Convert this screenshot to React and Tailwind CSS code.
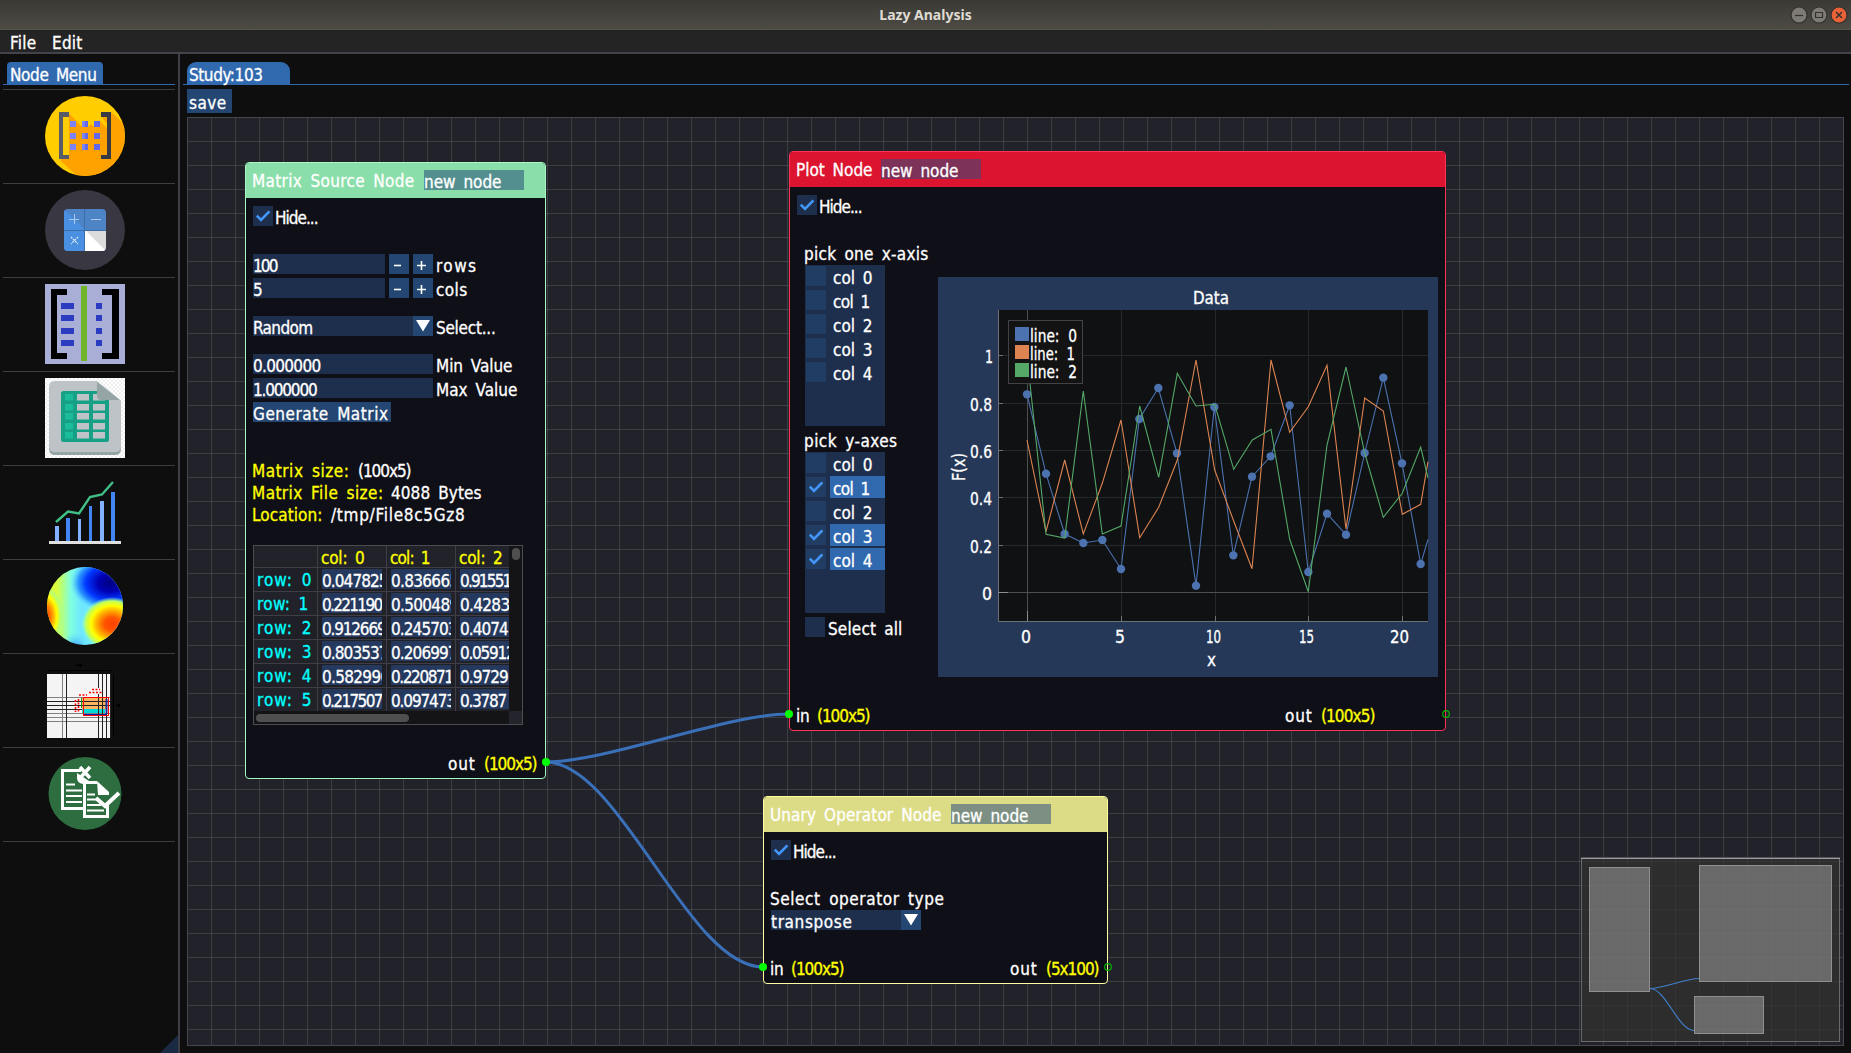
import React, { useLayoutEffect, useRef, useState } from 'react';

const FONT = 'DejaVu Sans Condensed';

/* Text fitted to a given advance width through letter spacing. */
function T({ w, children, className = '' }) {
  const ref = useRef(null);
  const [ls, setLs] = useState(0);
  useLayoutEffect(() => {
    const natural = ref.current.getBoundingClientRect().width;
    setLs((w + 1.5 - natural) / String(children).length);
  }, []);
  return (
    <span className={'block h-5 shrink-0 leading-[24px] whitespace-pre ' + className} style={{ width: w }}>
      <span ref={ref} className="-ml-px inline-block [word-spacing:3px]" style={{ letterSpacing: ls }}>{children}</span>
    </span>
  );
}

const ADV = { '.': 4, 1: 5, 7: 7.2 };
const numWidth = (s) => [...s].reduce((a, c) => a + (ADV[c] ?? 9), 0) - 1;

function Check() {
  return (
    <svg className="block size-5" viewBox="0 0 20 20" fill="none" stroke="#4296fa" strokeWidth="2.6">
      <path d="M3.8 9.6L8 14L16.4 5.4" />
    </svg>
  );
}

function HideRow({ w = 41 }) {
  return (
    <div className="mt-2 flex gap-[3px]">
      <div className="size-5 bg-[#1e2f4d]"><Check /></div>
      <T w={w}>Hide...</T>
    </div>
  );
}

function Header({ title, w, gap, bg, field }) {
  return (
    <div className={'flex h-[35px] shrink-0 pl-[7px] ' + bg}>
      <T w={w} className="mt-[6px]">{title}</T>
      <div className={'mt-[7px] h-5 w-[100px] pl-px ' + gap + ' ' + field}>
        <T w={76}>new node</T>
      </div>
    </div>
  );
}

function Arrow() {
  return (
    <svg className="block size-5 shrink-0 bg-[#234672]" viewBox="0 0 20 20">
      <path d="M3 4H17L10 15.5Z" fill="#fff" />
    </svg>
  );
}

function Stepper({ value, vw, label, lw }) {
  return (
    <div className="flex gap-1">
      <div className="h-5 w-[132px] bg-[#1e2f4d] pl-px"><T w={vw}>{value}</T></div>
      <svg className="size-5 bg-[#234672]" viewBox="0 0 20 20"><path d="M5 11.5H12" stroke="#fff" strokeWidth="1.6" /></svg>
      <svg className="size-5 bg-[#234672]" viewBox="0 0 20 20"><path d="M4 11.5H13M8.5 7V16" stroke="#fff" strokeWidth="1.6" /></svg>
      <T w={lw}>{label}</T>
    </div>
  );
}

function Field({ value, vw, label, lw, mt }) {
  return (
    <div className={'flex gap-1 ' + mt}>
      <div className="h-5 w-[180px] bg-[#1e2f4d] pl-px"><T w={vw}>{value}</T></div>
      <T w={lw}>{label}</T>
    </div>
  );
}

const ROWS = [
  ['0.047825', '0.836665', '0.91551'],
  ['0.221190', '0.500489', '0.4283'],
  ['0.912669', '0.245703', '0.4074'],
  ['0.803537', '0.206997', '0.05912'],
  ['0.582990', '0.220871', '0.9729'],
  ['0.217507', '0.097473', '0.3787'],
];

function MatrixTable() {
  return (
    <div className="mt-[22px] grid h-[180px] w-[270px] grid-cols-[255px_13px] grid-rows-[165px_13px] border border-[#4b4b50] bg-[#141417]">
      <div className="overflow-hidden bg-[#1d1d24]">
        <div className="w-[273px]">
          <div className="flex h-[22px] border-b border-[#3e3e44] bg-[#22222a] text-[#ffff00]">
            <div className="w-16 border-r border-[#3e3e44]" />
            {[42, 38, 42].map((w, i) => (
              <div key={i} className="w-[69px] border-r border-[#3e3e44] pl-1"><T w={w}>{'col: ' + i}</T></div>
            ))}
          </div>
          {ROWS.map((r, i) => (
            <div key={i} className={'flex h-6 border-b border-[#3e3e44] ' + (i % 2 ? 'bg-[#22222a]' : 'bg-[#1f1f27]')}>
              <div className="w-16 border-r border-[#3e3e44] pl-1 text-[#00ffff]"><T w={i === 1 ? 50 : 54}>{'row: ' + i}</T></div>
              {r.map((v, j) => (
                <div key={j} className="w-[69px] border-r border-[#3e3e44] pt-px pl-1">
                  <div className="h-5 w-[60px] overflow-hidden bg-[#24395d] pl-px"><T w={numWidth(v)}>{v}</T></div>
                </div>
              ))}
            </div>
          ))}
        </div>
      </div>
      <div className="flex justify-center pt-[2px]"><div className="h-3 w-2 rounded-full bg-[#4f4f4f]" /></div>
      <div className="flex items-center pl-[2px]"><div className="h-2 w-[153px] rounded-full bg-[#4f4f4f]" /></div>
      <div className="bg-[#24242d]" />
    </div>
  );
}

function MatrixNode() {
  return (
    <div className="absolute top-[44px] left-[57px] flex h-[617px] w-[301px] flex-col overflow-hidden rounded-[4px] border border-[#a6f7c0] bg-[#0f0f17]">
      <Header title="Matrix Source Node" w={161} gap="ml-[10px]" bg="bg-[#8adea9]" field="bg-[#548f90]" />
      <div className="flex flex-col pl-[7px]">
        <HideRow />
        <div className="mt-7 flex flex-col gap-1">
          <Stepper value="100" vw={22} label="rows" lw={40} />
          <Stepper value="5" vw={8} label="cols" lw={30} />
        </div>
        <div className="mt-[18px] flex">
          <div className="h-5 w-40 bg-[#1e2f4d] pl-px"><T w={58}>Random</T></div>
          <Arrow />
          <T w={58} className="ml-1">Select...</T>
        </div>
        <Field mt="mt-[18px]" value="0.000000" vw={66} label="Min Value" lw={75} />
        <Field mt="mt-1" value="1.000000" vw={62} label="Max Value" lw={80} />
        <div className="mt-1 h-5 w-[138px] bg-[#234672] pl-px"><T w={134}>Generate Matrix</T></div>
        <div className="mt-[37px] flex flex-col gap-[2px]">
          <div className="flex gap-[10px]"><T w={96} className="text-[#ffff00]">Matrix size:</T><T w={51}>(100x5)</T></div>
          <div className="flex gap-[9px]"><T w={130} className="text-[#ffff00]">Matrix File size:</T><T w={89}>4088 Bytes</T></div>
          <div className="flex gap-[10px]"><T w={69} className="text-[#ffff00]">Location:</T><T w={133}>/tmp/File8c5Gz8</T></div>
        </div>
        <MatrixTable />
        <div className="mt-[27px] flex justify-end gap-[10px] pr-[9px]"><T w={26}>out</T><T w={51} className="text-[#ffff00]">(100x5)</T></div>
      </div>
    </div>
  );
}

function ColList({ picked }) {
  return (
    <div className="flex h-[161px] w-20 flex-col gap-[2px] bg-[#1e2f4d]">
      {[0, 1, 2, 3, 4].map((i) => (
        <div key={i} className="flex h-[22px] gap-1 pl-px">
          <div className="mt-px size-5 bg-[#223d64]">{picked.includes(i) && <Check />}</div>
          <div className={'flex-1 pt-px pl-1 ' + (picked.includes(i) ? 'bg-[#3169af]' : '')}>
            <T w={i === 1 ? 35 : 38}>{'col ' + i}</T>
          </div>
        </div>
      ))}
    </div>
  );
}

const BLUE = [[291,373],[348,611],[404,792],[460,819],[517,810],[573,897],[628,447],[685,354],[741,550],[798,947],[853,411],[910,856],[966,620],[1022,559],[1079,406],[1135,906],[1191,731],[1248,794],[1304,549],[1360,323],[1416,580],[1472,882],[1494,808]];
const ORANGE = [[291,510],[348,785],[404,570],[460,792],[517,640],[573,450],[629,803],[686,712],[742,570],[798,270],[854,600],[910,750],[966,896],[1023,270],[1079,487],[1135,410],[1191,286],[1248,777],[1304,384],[1360,423],[1417,733],[1472,703],[1494,575]];
const GREEN = [[291,255],[348,793],[404,804],[460,363],[517,792],[573,768],[629,408],[686,622],[742,310],[798,408],[854,403],[911,598],[967,510],[1023,478],[1079,808],[1135,965],[1191,525],[1248,291],[1304,549],[1360,742],[1417,670],[1472,531],[1494,624]];
const px = ([x, y]) => [(x - 24) / 3, (y - 21) / 3];
const line = (a) => a.map((p) => px(p).map((v) => v.toFixed(1)).join(',')).join(' ');

const Label = ({ x, y, w, children, ...p }) => (
  <text x={x} y={y} textLength={w} lengthAdjust="spacingAndGlyphs" fill="#fff" fontSize="17" {...p}>{children}</text>
);

function Chart() {
  return (
    <svg className="block h-[400px] w-[500px] bg-[#253858]" viewBox="0 0 500 400">
      <rect x="60" y="33" width="430" height="311" fill="#0f1112" />
      <g stroke="#26292a" strokeWidth="1">
        {[78.5, 126.5, 173.5, 220.5, 268.5].map((y) => <path key={y} d={`M60 ${y}H490`} />)}
        {[183.5, 277.5, 370.5, 464.5].map((x) => <path key={x} d={`M${x} 33V344`} />)}
      </g>
      <path d="M60 315.5H490M89.5 33V344" stroke="#4d4f50" />
      <g stroke="#6c7176">
        <path d="M60.5 33V344.5H490" fill="none" />
        {[78.5, 126.5, 173.5, 220.5, 268.5].map((y) => <path key={y} d={`M60 ${y}H65`} />)}
        {[183.5, 277.5, 370.5, 464.5].map((x) => <path key={x} d={`M${x} 344V339`} />)}
      </g>
      <path d="M60 315.5H70M89.5 344V334" stroke="#8c8f90" />
      <polyline points={line(BLUE)} fill="none" stroke="#4c72b0" strokeWidth="1.1" />
      {BLUE.slice(0, 22).map((p, i) => <circle key={i} cx={px(p)[0]} cy={px(p)[1]} r="4.2" fill="#4c72b0" />)}
      <polyline points={line(ORANGE)} fill="none" stroke="#dd8452" strokeWidth="1.1" />
      <polyline points={line(GREEN)} fill="none" stroke="#55a868" strokeWidth="1.1" />
      <rect x="70.5" y="43.5" width="74" height="63" fill="#131314" stroke="#424247" />
      <rect x="77" y="50" width="14" height="14" fill="#4c72b0" />
      <rect x="77" y="68" width="14" height="14" fill="#dd8452" />
      <rect x="77" y="86" width="14" height="14" fill="#55a868" />
      <g stroke="#fff" strokeWidth="0.3">
        <Label x="92" y="65" w="47">line:&#160; 0</Label>
        <Label x="92" y="83" w="45">line:&#160; 1</Label>
        <Label x="92" y="101" w="47">line:&#160; 2</Label>
        <Label x="255" y="27" w="36">Data</Label>
        <Label x="47" y="86" w="8">1</Label>
        <Label x="32" y="134" w="22">0.8</Label>
        <Label x="32" y="181" w="22">0.6</Label>
        <Label x="32" y="228" w="22">0.4</Label>
        <Label x="32" y="276" w="22">0.2</Label>
        <Label x="44" y="323" w="10">0</Label>
        <Label x="83" y="366" w="10">0</Label>
        <Label x="177" y="366" w="10">5</Label>
        <Label x="268" y="366" w="15">10</Label>
        <Label x="361" y="366" w="15">15</Label>
        <Label x="452" y="366" w="19">20</Label>
        <Label x="269" y="389" w="9">x</Label>
        <Label x="0" y="0" w="28" transform="translate(27 204) rotate(-90)">F(x)</Label>
      </g>
    </svg>
  );
}

function PlotNode() {
  return (
    <div className="absolute top-[33px] left-[601px] flex h-[580px] w-[657px] flex-col overflow-hidden rounded-[4px] border border-[#ff3156] bg-[#0f0f17]">
      <Header title="Plot Node" w={75} gap="ml-[9px]" bg="bg-[#dc1430]" field="bg-[#7c3259]" />
      <div className="flex flex-col pl-[7px]">
        <HideRow />
        <div className="flex pl-2">
          <div className="w-[133px] pt-[27px]">
            <T w={123}>pick one x-axis</T>
            <div className="mt-[3px]"><ColList picked={[]} /></div>
            <T w={92} className="mt-[3px]">pick y-axes</T>
            <div className="mt-[3px]"><ColList picked={[1, 3, 4]} /></div>
            <div className="mt-1 flex gap-1"><div className="size-5 bg-[#1e2f4d]" /><T w={73}>Select all</T></div>
          </div>
          <div className="pt-[62px]"><Chart /></div>
        </div>
        <div className="mt-[27px] flex pr-[71px]">
          <T w={12}>in</T><T w={51} className="ml-[9px] text-[#ffff00]">(100x5)</T>
          <T w={26} className="ml-auto">out</T><T w={52} className="ml-[10px] text-[#ffff00]">(100x5)</T>
        </div>
      </div>
    </div>
  );
}

function UnaryNode() {
  return (
    <div className="absolute top-[678px] left-[575px] flex h-[188px] w-[345px] flex-col overflow-hidden rounded-[4px] border border-[#ffffa0] bg-[#0f0f17]">
      <Header title="Unary Operator Node" w={170} gap="ml-[10px]" bg="bg-[#dcdc87]" field="bg-[#7c8f82]" />
      <div className="flex flex-col pl-[7px]">
        <HideRow />
        <T w={173} className="mt-[27px]">Select operator type</T>
        <div className="mt-[3px] flex"><div className="h-5 w-[130px] bg-[#1e2f4d] pl-px"><T w={80}>transpose</T></div><Arrow /></div>
        <div className="mt-[27px] flex pr-[9px]">
          <T w={12}>in</T><T w={51} className="ml-[9px] text-[#ffff00]">(100x5)</T>
          <T w={26} className="ml-auto">out</T><T w={51} className="ml-[10px] text-[#ffff00]">(5x100)</T>
        </div>
      </div>
    </div>
  );
}

function MiniMap() {
  return (
    <svg className="absolute right-[2px] bottom-[2px] h-[186px] w-[260px]" viewBox="1581 857 260 186">
      <rect x="1581" y="857" width="259" height="185" fill="rgba(50,50,48,0.75)" />
      <rect x="1581.5" y="858.5" width="258" height="183" fill="none" stroke="#69696b" />
      <path d="M1581 857.5H1840" stroke="#555557" />
      <path d="M1581 858.5H1840" stroke="#9c9c9c" />
      <g fill="rgba(200,200,200,0.39)" stroke="#8f8f91">
        <rect x="1589.5" y="867.5" width="60" height="124" />
        <rect x="1699.5" y="865.5" width="132" height="116" />
        <rect x="1694.5" y="996.5" width="69" height="37" />
      </g>
      <g fill="none" stroke="#4180cc" strokeWidth="1.2">
        <path d="M1650 988.5C1663 988.5 1686 978.5 1699 978.5" />
        <path d="M1650 988.5C1666 988.5 1678 1030.5 1694 1030.5" />
      </g>
    </svg>
  );
}

function Links() {
  return (
    <svg className="absolute inset-0 h-full w-full" viewBox="188 118 1655 927">
      <g fill="none" stroke="#3970b8" strokeWidth="3">
        <path d="M545.5 762C607 762 727 714 789 714" />
        <path d="M545.5 762C620 762 688 967 763 967" />
      </g>
    </svg>
  );
}

function Pins() {
  return (
    <svg className="absolute inset-0 h-full w-full" viewBox="188 118 1655 927">
      <g fill="#00ff00">
        <circle cx="546" cy="762" r="4" /><circle cx="789" cy="714" r="4" /><circle cx="763" cy="967" r="4" />
      </g>
      <g fill="none" stroke="#00b400" strokeWidth="1.2"><circle cx="1446" cy="714" r="3.3" /><circle cx="1108" cy="967" r="3.3" /></g>
    </svg>
  );
}

const Svg = ({ children }) => <svg className="block size-20" viewBox="0 0 80 80">{children}</svg>;

const ICONS = [
  <Svg key="matrix">
    <clipPath id="c1"><circle cx="40" cy="40" r="40" /></clipPath>
    <circle cx="40" cy="40" r="40" fill="#ffcd00" />
    <path clipPath="url(#c1)" d="M24 17L36 30L43 31L46 28L49 31L55 25L62 32V28L57 21L66 16L80 29V80H32L15 64L24 60Z" fill="#ffa200" />
    <path d="M24 16H14V63H24V59H18V21H24Z" fill="#595c68" />
    <path d="M56 16H66V63H56V59H62V21H56Z" fill="#373a42" />
    {[25, 37, 48].map((y) => (
      <g key={y}>
        <path d={`M25 ${y}h6v6h-6zM37 ${y}h3v6h-3z`} fill="#7b84f5" />
        <path d={`M40 ${y}h3v6h-3zM49 ${y}h6v6h-6z`} fill="#6067ea" />
      </g>
    ))}
  </Svg>,
  <Svg key="calc">
    <circle cx="40" cy="40" r="40" fill="#393842" />
    <clipPath id="c2"><rect x="19" y="19" width="42" height="42" rx="4" /></clipPath>
    <g clipPath="url(#c2)">
      <path d="M19 19H61V61H19Z" fill="#4d84c6" />
      <path d="M19 19L61 61H19Z" fill="#4a90e2" />
      <path d="M40 40H61V61H40Z" fill="#dcdcdc" /><path d="M40 40L61 61H40Z" fill="#fff" />
      <path d="M39.5 19V61M19 40.500H61" stroke="#3d6ea8" />
    </g>
    <path d="M24 29.500H34M29.500 24V34M46 29.500H56" stroke="#a9c8ee" />
    <path d="M26 47L33 54M33 47L26 54" stroke="#e4eefb" strokeWidth="1.2" strokeDasharray="2 1" />
  </Svg>,
  <Svg key="concat">
    <path d="M0 0H80V80H0Z" fill="#a9aed6" />
    <path d="M6 5H22V11H12V69H22V75H6ZM57 5H74V75H57V69H67V11H57Z" />
    <path d="M36 2H42V77H36Z" fill="#70b52a" />
    {[19, 31, 44, 56].map((y) => <path key={y} d={`M16 ${y}h13v6h-13zM51 ${y}h6v6h-6z`} fill="#2c3cc0" />)}
  </Svg>,
  <Svg key="sheet">
    <pattern id="chk" width="4" height="4" patternUnits="userSpaceOnUse"><path d="M0 0H4V4H0Z" fill="#fff" /><path d="M0 0H2V2H0ZM2 2H4V4H2Z" fill="#f0f0f0" /></pattern>
    <path d="M0 0H80V80H0Z" fill="url(#chk)" />
    <path d="M9 6H70L76 24V71Q76 77 70 77H10Q4 77 4 71V10Z" fill="#95a5a6" />
    <path d="M10 3H53L76 22V68Q76 74 70 74H10Q4 74 4 68V9Q4 3 10 3Z" fill="#bdc3c7" />
    <rect x="16" y="13" width="48" height="51" rx="2.500" fill="#16a085" />
    {[16, 26, 35, 45, 54].map((y) => (
      <g key={y}><rect x="20" y={y} width="8" height="6.500" fill="#1abc9c" /><path d={`M32 ${y}h12v6.500h-12zM48 ${y}h12v6.500h-12z`} fill="#bdc3c7" /></g>
    ))}
    <path d="M52 0H80V24L75 22L52 3Z" fill="url(#chk)" />
    <path d="M52 4L75 22H56Q52 22 52 17Z" fill="#95a5a6" />
  </Svg>,
  <Svg key="bars">
    <path d="M10 54h4v15h-4zM33 47h3v22h-3zM55 29h4v40h-4z" fill="#82b1ff" />
    <path d="M21 46h4v23h-4zM44 34h3v35h-3zM66 20h4v49h-4z" fill="#4285f4" />
    <path d="M4 69H76V72H4Z" fill="#e0e0e0" />
    <path d="M11 50L23 39.500L34 41.500L45 25L57 22.500L68 10" fill="none" stroke="#40bf87" strokeWidth="2.400" />
  </Svg>,
  <Svg key="heat">
    <clipPath id="c6"><ellipse cx="40" cy="40" rx="38" ry="39" /></clipPath>
    <linearGradient id="h0"><stop offset="0" stopColor="#e8ff30" /><stop offset=".15" stopColor="#d8ff40" /><stop offset=".32" stopColor="#7fffe0" /><stop offset=".45" stopColor="#6fe8ff" /><stop offset="1" stopColor="#70f0ff" /></linearGradient>
    <radialGradient id="h1"><stop offset="0" stopColor="#000080" /><stop offset=".3" stopColor="#0000b4" /><stop offset=".6" stopColor="#0038ff" /><stop offset=".8" stopColor="#2c98ff" /><stop offset="1" stopColor="#60d8ff" stopOpacity="0" /></radialGradient>
    <radialGradient id="h2"><stop offset="0" stopColor="#ff4000" /><stop offset=".25" stopColor="#ff5500" /><stop offset=".5" stopColor="#ffb000" /><stop offset=".68" stopColor="#ffff00" /><stop offset=".85" stopColor="#c0ff60" /><stop offset="1" stopColor="#7fffe0" stopOpacity="0" /></radialGradient>
    <radialGradient id="h3"><stop offset="0" stopColor="#2880ff" /><stop offset="1" stopColor="#60d8ff" stopOpacity="0" /></radialGradient>
    <g clipPath="url(#c6)">
      <path d="M0 0H80V80H0Z" fill="url(#h0)" />
      <ellipse cx="65" cy="17" rx="40" ry="29" fill="url(#h1)" />
      <ellipse cx="67" cy="58" rx="31" ry="27" fill="url(#h2)" />
      <ellipse cx="-1" cy="50" rx="19" ry="30" fill="url(#h2)" />
      <ellipse cx="30" cy="83" rx="14" ry="17" fill="url(#h3)" />
    </g>
  </Svg>,
  <Svg key="slice">
    <path d="M3 10.500H66M68.500 15V75" stroke="#000" />
    <path d="M31 4h2v2h-2zM34 4h3v3h-3zM72 44h3v3h-3z" fill="#000" />
    <path d="M2 14H66V78H2Z" fill="#f4f4f4" />
    <path d="M37 38H62V49H37Z" fill="#ffb45f" /><path d="M37 49H60V53H37Z" fill="#00d8d8" /><path d="M38 54H61V55.500H38Z" fill="#0018b0" />
    <path d="M2 37.500H66M2 53.500H66M2 57.500H66M2 61.500H66M17.500 14V78" stroke="#808080" />
    <path d="M2 41.500H66M2 45.500H66M2 49.500H37M21.500 14V78M53.500 14V78M57.500 14V78M61.500 14V78M65.500 14V78" stroke="#222" />
    <path d="M36.500 38V48" stroke="#1a9a1a" />
    <path d="M61.500 39V54" stroke="#202a90" strokeWidth="2" />
    <rect x="38.500" y="37.500" width="25" height="18" fill="none" stroke="#f00" />
    <path d="M43 28H56V34H43Z" fill="#f4f4f4" />
    <path d="M44 32.500H57M47 29.500H55M34 35H42M30.500 40V52M33.500 39V53" stroke="#f00" strokeWidth="1.6" strokeDasharray="2 1.500" />
  </Svg>,
  <Svg key="docs">
    <circle cx="40" cy="39.500" r="36.500" fill="#2d6d40" />
    <g fill="none" stroke="#fff" strokeWidth="3">
      <path d="M38 54.500H17.500V16.500H36" />
      <path d="M39.500 29V62.500H62.500V49M39 28.500H52" />
      <path d="M35 13L45 24M45 13L35 24" strokeWidth="3.500" />
      <path d="M51 44L60 52L74 39" strokeWidth="4" />
      <path d="M21 30.500H30M21 36.500H37M21 42H37M21 48H37M42 40.500H50M42 45.500H51M42 51H56M42 56.500H59" strokeWidth="2.200" />
    </g>
    <path d="M52 27L64 38V41H53ZM32 19L44 27L38 30Q32 29 32 24Z" fill="#fff" />
  </Svg>,
];

function Sidebar() {
  return (
    <div className="flex w-[180px] shrink-0 flex-col border-r-2 border-[#3e3e46] bg-[#0e0e0e]">
      <div className="mx-[3px] mt-2 flex h-[23px] border-b border-[#3169af] pl-1">
        <div className="h-[22px] w-24 rounded-t-[4px] bg-[#3169af] pl-1"><T w={85} className="mt-px">Node Menu</T></div>
      </div>
      <div className="mx-[3px] mt-1 flex flex-col border-t border-[#3e3e42]">
        {ICONS.map((icon, i) => (
          <div key={i} className="h-[94px] border-b border-[#3e3e42] pt-[6px] pl-[42px]">{icon}</div>
        ))}
      </div>
      <svg className="mt-auto ml-auto block size-[18px]" viewBox="0 0 18 18"><path d="M18 0V18H0Z" fill="#1a2a42" /></svg>
    </div>
  );
}

function WinButton({ fill, children }) {
  return (
    <svg className="size-[18px]" viewBox="0 0 18 18" fill="none" stroke="#32312d" strokeWidth="1.200">
      <circle cx="9" cy="9" r="8" fill={fill} />{children}
    </svg>
  );
}

export default function App() {
  return (
    <div className="flex h-[1053px] w-[1851px] flex-col overflow-hidden bg-[#0e0e0e] text-[17px] text-white [-webkit-text-stroke:0.3px]" style={{ fontFamily: `"${FONT}", "DejaVu Sans", sans-serif`, fontStretch: 'condensed' }}>
      <div className="grid h-[30px] shrink-0 grid-cols-3 items-center border-b border-[#53524d] bg-linear-to-b from-[#3a3934] to-[#4d4b44] pr-[3px]">
        <div />
        <div className="pl-[3px] text-center font-[Noto_Sans] text-[14px] leading-5 font-bold text-[#dfdbd2] [-webkit-text-stroke:0px]">Lazy Analysis</div>
        <div className="flex justify-end gap-[2px]">
          <WinButton fill="#7d7b74"><path d="M5 9.500H13" /></WinButton>
          <WinButton fill="#7d7b74"><path d="M5.500 6.500H12.500V11.500H5.500Z" /></WinButton>
          <WinButton fill="#ec6238"><path d="M6 6L12 12M12 6L6 12" strokeWidth="1.500" /></WinButton>
        </div>
      </div>
      <div className="flex h-6 shrink-0 gap-[17px] border-b-2 border-[#43434c] bg-[#242424] pt-px pl-[11px]">
        <T w={25}>File</T><T w={29}>Edit</T>
      </div>
      <div className="flex min-h-0 flex-1">
        <Sidebar />
        <div className="flex min-w-0 flex-1 flex-col pt-2">
          <div className="mr-[2px] ml-[3px] flex h-[23px] shrink-0 border-b border-[#3169af] pl-1">
            <div className="h-[22px] w-[103px] rounded-t-[9px] bg-[#3169af] pl-[3px]"><T w={72} className="mt-px">Study:103</T></div>
          </div>
          <div className="mt-1 ml-[7px] h-6 w-[45px] shrink-0 bg-[#234672] pt-[2px] pl-[3px]"><T w={36}>save</T></div>
          <div className="relative mt-1 ml-[7px] h-[929px] w-[1657px] shrink-0 overflow-hidden border border-[#46464f] bg-[#22222b] bg-[linear-gradient(to_right,transparent_23px,rgba(200,200,200,0.157)_23px),linear-gradient(to_bottom,transparent_23px,rgba(200,200,200,0.157)_23px)] bg-size-[24px_24px]">
            <Links />
            <MatrixNode />
            <PlotNode />
            <UnaryNode />
            <Pins />
            <MiniMap />
          </div>
        </div>
      </div>
    </div>
  );
}
